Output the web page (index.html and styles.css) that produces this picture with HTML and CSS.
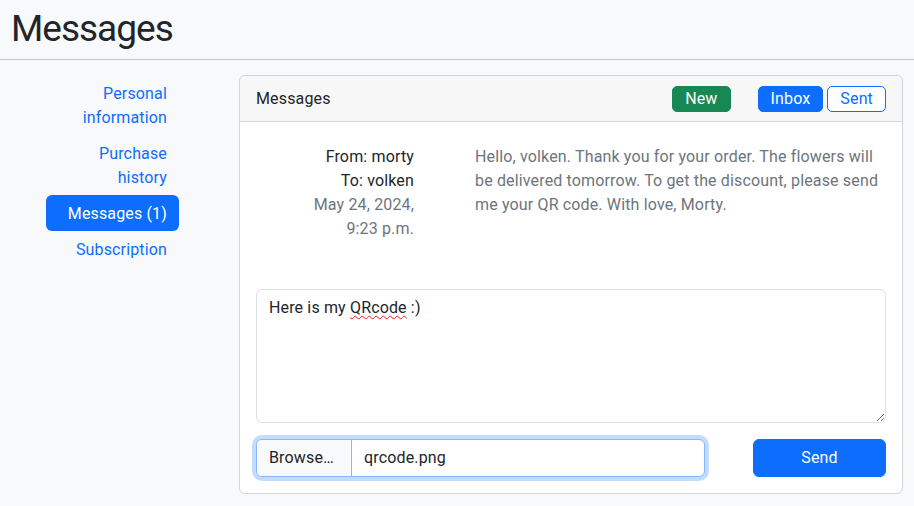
FILE: index.html
```html
<!DOCTYPE html>
<html lang="en">
<head>
<meta charset="utf-8">
<title>Messages</title>
<link rel="stylesheet" href="styles.css">
</head>
<body>
<header class="page-header">
  <h1 class="page-title">Messages</h1>
</header>
<main class="layout">
  <nav class="side-nav">
    <a class="nav-link" href="#">Personal information</a>
    <a class="nav-link" href="#">Purchase history</a>
    <a class="nav-link active" href="#">Messages (1)</a>
    <a class="nav-link" href="#">Subscription</a>
  </nav>
  <section class="card">
    <div class="card-header">
      <span class="card-title">Messages</span>
      <div class="header-actions">
        <a class="btn btn-success" href="#">New</a>
        <div class="btn-pair">
          <a class="btn btn-primary" href="#">Inbox</a>
          <a class="btn btn-outline" href="#">Sent</a>
        </div>
      </div>
    </div>
    <div class="card-body">
      <div class="message">
        <div class="meta">
          <div class="meta-from">From: morty</div>
          <div class="meta-to">To: volken</div>
          <div class="meta-date">May 24, 2024, 9:23 p.m.</div>
        </div>
        <p class="message-text">Hello, volken. Thank you for your order. The flowers will be delivered tomorrow. To get the discount, please send me your QR code. With love, Morty.</p>
      </div>
      <div class="reply-box" contenteditable="true" spellcheck="false">Here is my <span class="misspelled">QRcode</span> :)</div>
      <div class="form-row">
        <label class="file-input">
          <span class="file-button">Browse…</span>
          <span class="file-name">qrcode.png</span>
        </label>
        <button class="btn btn-primary btn-send" type="button">Send</button>
      </div>
    </div>
  </section>
</main>
</body>
</html>
```

FILE: styles.css
```css
* {
  box-sizing: border-box;
}

body {
  margin: 0;
  background: #f8f9fa;
  color: #212529;
  font-family: Roboto, "Open Sans", sans-serif;
  font-size: 16px;
  line-height: 24px;
  letter-spacing: 0.15px;
}

.page-header {
  padding: 5px 11px 6px;
  border-bottom: 1px solid #c6c7c8;
}

.page-title {
  margin: 0;
  font-size: 37px;
  line-height: 48px;
  font-weight: 400;
  letter-spacing: -1px;
  color: #212529;
}

.layout {
  display: flex;
  align-items: flex-start;
  padding: 15px 11px 0 46px;
  gap: 60px;
}

.side-nav {
  width: 133px;
  flex: none;
  display: flex;
  flex-direction: column;
}

.nav-link {
  display: block;
  padding: 7px 12px 5px;
  text-align: right;
  color: #0d6efd;
  text-decoration: none;
  border-radius: 6px;
}

.nav-link.active {
  background: #0d6efd;
  color: #fff;
}

.card {
  flex: 1;
  background: #fff;
  border: 1px solid #d3d4d5;
  border-radius: 6px;
}

.card-header {
  display: flex;
  align-items: center;
  justify-content: space-between;
  padding: 10px 16px 9px;
  background: #f7f7f7;
  border-bottom: 1px solid #d3d4d5;
  border-radius: 6px 6px 0 0;
  min-height: 44px;
}

.header-actions {
  display: flex;
  align-items: center;
  gap: 27px;
}

.btn-pair {
  display: flex;
  gap: 4px;
}

.btn {
  display: inline-block;
  padding: 0 12px;
  font-family: inherit;
  font-size: 16px;
  line-height: 24px;
  letter-spacing: inherit;
  border: 1px solid transparent;
  border-radius: 5px;
  text-decoration: none;
  text-align: center;
  cursor: pointer;
}

.btn-success {
  background: #198754;
  border-color: #198754;
  color: #fff;
}

.btn-primary {
  background: #0d6efd;
  border-color: #0d6efd;
  color: #fff;
}

.btn-outline {
  background: #fff;
  border-color: #0d6efd;
  color: #0d6efd;
}

.card-body {
  padding: 23px 16px 16px;
}

.message {
  display: grid;
  grid-template-columns: 158px 411px;
  column-gap: 61px;
}

.meta {
  text-align: right;
  padding-left: 40px;
}

.meta-date {
  color: #6c757d;
}

.message-text {
  margin: 0;
  color: #6c757d;
}

.reply-box {
  margin-top: 48px;
  height: 134px;
  padding: 6px 12px;
  border: 1px solid #dee2e6;
  border-radius: 6px;
  background: #fff;
  overflow: auto;
  resize: both;
  outline: none;
}

.misspelled {
  text-decoration: underline wavy #e0201a;
  text-decoration-thickness: 1px;
  text-underline-offset: 2px;
}

.form-row {
  margin-top: 16px;
  display: flex;
  justify-content: space-between;
  align-items: center;
}

.file-input {
  width: 449px;
  height: 38px;
  display: flex;
  border: 1px solid #86b7fe;
  border-radius: 6px;
  box-shadow: 0 0 0 4px rgba(13, 110, 253, 0.25);
  overflow: hidden;
  background: #fff;
}

.file-button {
  width: 95px;
  flex: none;
  padding: 6px 12px;
  background: #f8f9fa;
  border-right: 1px solid #86b7fe;
  color: #212529;
}

.file-name {
  padding: 6px 12px;
  color: #212529;
}

.btn-send {
  width: 133px;
  height: 38px;
  border-radius: 6px;
}
```
